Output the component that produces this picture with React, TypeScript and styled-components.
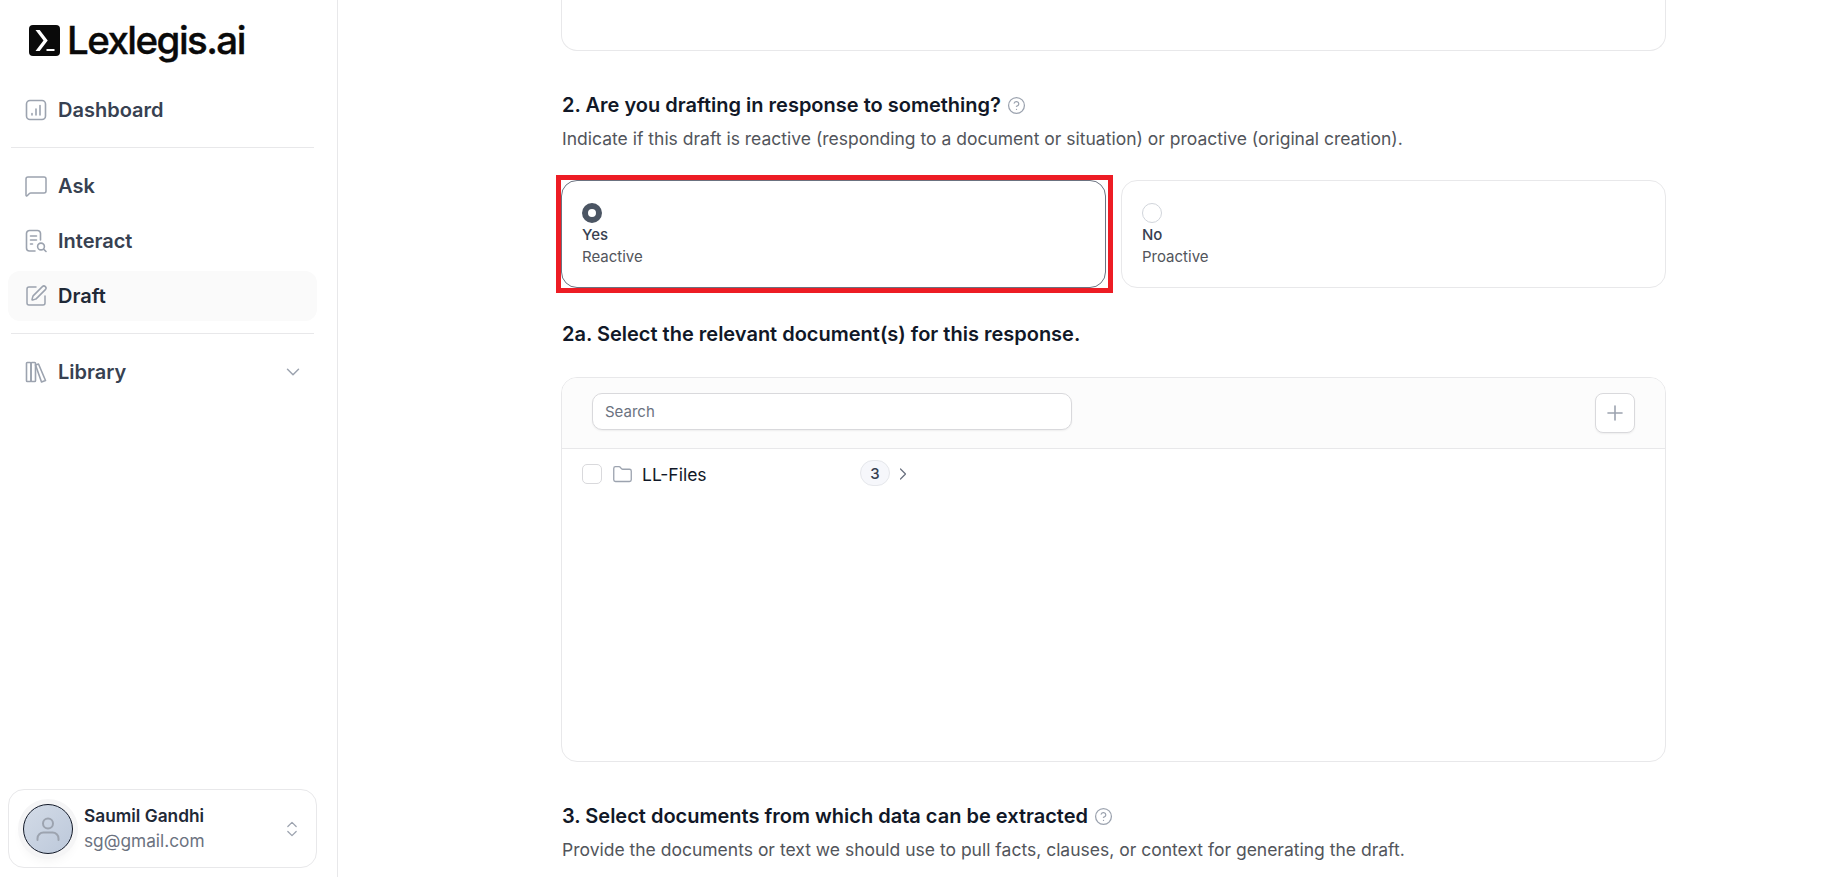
import React from "react";
import styled, { createGlobalStyle } from "styled-components";
import {
  ChevronDown,
  ChevronRight,
  ChevronsUpDown,
  CircleHelp,
  Folder,
  MessageSquare,
  Plus,
  SquarePen,
} from "lucide-react";

const GlobalStyle = createGlobalStyle`
  html, body {
    margin: 0;
    padding: 0;
    height: 100%;
    overflow: hidden;
    background: #ffffff;
    font-family: "Inter", "Noto Sans", sans-serif;
  }
  * {
    box-sizing: border-box;
  }
`;

const Page = styled.div`
  display: flex;
  width: 100%;
  height: 100vh;
  overflow: hidden;
`;

const Sidebar = styled.aside`
  width: 338px;
  flex-shrink: 0;
  height: 100%;
  display: flex;
  flex-direction: column;
  border-right: 1px solid #e8e8ea;
  padding: 0 20px 9px 8px;
`;

const LogoRow = styled.div`
  display: flex;
  align-items: center;
  gap: 7px;
  height: 40px;
  margin: 20px 0 1px 21px;
`;

const LogoText = styled.span`
  font-size: 38.5px;
  font-weight: 500;
  letter-spacing: -1.55px;
  line-height: 40px;
  color: #0a0a0a;
  -webkit-text-stroke: 0.4px #0a0a0a;
`;

const NavItem = styled.div<{ $active?: boolean }>`
  display: flex;
  align-items: center;
  gap: 10px;
  height: 50px;
  padding: 0 13px 0 16px;
  border-radius: 12px;
  background: ${(p) => (p.$active ? "#fafafa" : "transparent")};
  color: ${(p) => (p.$active ? "#1f2937" : "#374151")};
  font-size: 20px;
  font-weight: 600;
  svg {
    color: #9ca3af;
    flex-shrink: 0;
  }
`;

const IconSlot = styled.span`
  width: 24px;
  display: flex;
  justify-content: center;
  flex-shrink: 0;
`;

const NavLabel = styled.span`
  flex: 1;
`;

const NavDivider = styled.div`
  height: 1px;
  margin: 0 3px 0 3px;
  background: #e8e8ea;
`;

const FirstGroup = styled.div`
  margin-top: 24px;
  padding-bottom: 12px;
`;

const SecondGroup = styled.div`
  display: flex;
  flex-direction: column;
  gap: 5px;
  padding: 13px 0 12px;
`;

const LibraryGroup = styled.div`
  padding-top: 13px;
`;

const UserCard = styled.div`
  margin-top: auto;
  height: 79px;
  display: flex;
  align-items: center;
  padding: 0 14px;
  border: 1px solid #e8e8ea;
  border-radius: 16px;
  svg.updown {
    color: #9ca3af;
    margin-left: auto;
  }
`;

const Avatar = styled.div`
  width: 50px;
  height: 50px;
  border-radius: 50%;
  border: 1px solid #111827;
  background: linear-gradient(135deg, #d3dbe7, #bcc8da);
  display: flex;
  align-items: center;
  justify-content: center;
  color: #9ca3af;
  box-shadow: 0 0 0 5px #f5f5f6, 0 6px 12px rgba(0, 0, 0, 0.06);
`;

const UserInfo = styled.div`
  margin-left: 11px;
  display: flex;
  flex-direction: column;
  gap: 3px;
`;

const UserName = styled.span`
  font-size: 17.3px;
  font-weight: 600;
  line-height: 22px;
  color: #1f2937;
`;

const UserEmail = styled.span`
  font-size: 17.3px;
  line-height: 22px;
  color: #6b7280;
`;

const Main = styled.main`
  flex: 1;
  height: 100%;
  overflow: hidden;
  padding-left: 223px;
`;

const Content = styled.div`
  width: 1105px;
`;

const TopCard = styled.div`
  height: 51px;
  border: 1px solid #e8e8ea;
  border-top: none;
  border-radius: 0 0 16px 16px;
`;

const Heading = styled.h2<{ $top: number }>`
  display: flex;
  align-items: center;
  gap: 6px;
  margin: ${(p) => p.$top}px 0 0 1px;
  font-size: 20px;
  font-weight: 600;
  line-height: 28px;
  color: #111827;
  svg {
    color: #9ca3af;
  }
`;

const SubText = styled.p`
  margin: 8px 0 0 1px;
  font-size: 17.5px;
  line-height: 24px;
  color: #52555b;
`;

const OptionRow = styled.div`
  display: flex;
  gap: 15px;
  margin-top: 29px;
`;

const OptionCard = styled.div<{ $selected?: boolean }>`
  position: relative;
  flex: 1;
  height: 108px;
  padding: 22px 19px 0 20px;
  border-radius: 16px;
  border: 1px solid ${(p) => (p.$selected ? "#6b7280" : "#e8e8ea")};
  ${(p) =>
    p.$selected &&
    `&::after {
      content: "";
      position: absolute;
      inset: -6px -8px -6px -6px;
      border: 5px solid #ed1c24;
    }`}
`;

const Radio = styled.div<{ $checked?: boolean }>`
  width: 20px;
  height: 20px;
  border-radius: 50%;
  border: ${(p) => (p.$checked ? "6px solid #4b5563" : "1px solid #d1d5db")};
  background: #ffffff;
`;

const OptionTitle = styled.div`
  margin-top: 1px;
  font-size: 15px;
  font-weight: 500;
  line-height: 22px;
  color: #374151;
`;

const OptionDesc = styled.div`
  font-size: 15px;
  line-height: 21px;
  color: #52555b;
`;

const Browser = styled.div`
  height: 385px;
  margin-top: 29px;
  border: 1px solid #e8e8ea;
  border-radius: 16px;
  overflow: hidden;
`;

const BrowserHeader = styled.div`
  height: 71px;
  display: flex;
  align-items: flex-start;
  justify-content: space-between;
  padding: 15px 30px 0 30px;
  background: #fcfcfc;
  border-bottom: 1px solid #e8e8ea;
`;

const SearchBox = styled.div`
  width: 480px;
  height: 37px;
  display: flex;
  align-items: center;
  padding: 0 12px 1px;
  border: 1px solid #d9d9dc;
  border-radius: 10px;
  background: #ffffff;
  font-size: 15px;
  color: #6b7280;
  box-shadow: 0 1px 2px rgba(0, 0, 0, 0.06);
`;

const AddButton = styled.div`
  width: 40px;
  height: 40px;
  display: flex;
  align-items: center;
  justify-content: center;
  border: 1px solid #d9d9dc;
  border-radius: 8px;
  background: #ffffff;
  color: #9ca3af;
  box-shadow: 0 1px 2px rgba(0, 0, 0, 0.06);
`;

const FileRow = styled.div`
  display: flex;
  align-items: center;
  height: 42px;
  margin-top: 4px;
  padding-left: 20px;
  svg.folder {
    color: #9ca3af;
    margin-left: 10px;
  }
  svg.next {
    color: #6b7280;
    margin-left: 3px;
  }
`;

const Checkbox = styled.div`
  width: 20px;
  height: 20px;
  border: 1px solid #d9d9dc;
  border-radius: 5px;
`;

const FileName = styled.span`
  width: 218px;
  margin-left: 9px;
  font-size: 17.5px;
  color: #111827;
`;

const CountBadge = styled.span`
  width: 30px;
  height: 26px;
  display: flex;
  align-items: center;
  justify-content: center;
  margin-top: -2px;
  border: 1px solid #e5e7eb;
  border-radius: 13px;
  background: #f6f7fb;
  font-size: 15px;
  font-weight: 500;
  color: #374151;
`;

const LogoMark = () => (
  <svg width="31" height="31" viewBox="0 0 31 31">
    <rect width="31" height="31" rx="4" fill="#0a0a0a" />
    <path d="M6.5 5h4.2l8 10.5-8 10.5H6.5l8-10.5z" fill="#fff" />
    <rect x="17.5" y="24" width="8" height="2" fill="#fff" />
  </svg>
);

const DashboardIcon = () => (
  <svg width="22" height="22" viewBox="0 0 22 22" fill="none" stroke="currentColor" strokeWidth="1.6" strokeLinecap="round">
    <rect x="1.5" y="1.5" width="19" height="19" rx="3.5" />
    <path d="M7 16v-1.5M11 16V10M15 16V6.5" />
  </svg>
);

const InteractIcon = () => (
  <svg width="22" height="24" viewBox="0 0 22 24" fill="none" stroke="currentColor" strokeWidth="1.6" strokeLinecap="round">
    <path d="M10 22H4.5a3 3 0 0 1-3-3V4.5a3 3 0 0 1 3-3h8a3 3 0 0 1 3 3V11" />
    <path d="M5.5 7h6M5.5 11h6M5.5 15h2" />
    <circle cx="16" cy="17.5" r="3.4" />
    <path d="M18.6 20.2 21 22.5" />
  </svg>
);

const LibraryIcon = () => (
  <svg width="22" height="22" viewBox="0 0 22 22" fill="none" stroke="currentColor" strokeWidth="1.6" strokeLinejoin="round">
    <rect x="1.5" y="1.5" width="4.5" height="19" rx="0.8" />
    <rect x="6" y="1.5" width="4.5" height="19" rx="0.8" />
    <path d="M10.5 4 13.5 3l7 16.5-4 1.5z" />
  </svg>
);

const UserGlyph = () => (
  <svg width="26" height="26" viewBox="0 0 26 26" fill="none" stroke="currentColor" strokeWidth="2" strokeLinecap="round">
    <circle cx="13" cy="7.5" r="5" />
    <path d="M2.5 24v-1.5a6 6 0 0 1 6-6h9a6 6 0 0 1 6 6V24" />
  </svg>
);

export default function App() {
  return (
    <Page>
      <GlobalStyle />
      <Sidebar>
        <LogoRow>
          <LogoMark />
          <LogoText>Lexlegis.ai</LogoText>
        </LogoRow>
        <FirstGroup>
          <NavItem>
            <IconSlot><DashboardIcon /></IconSlot>
            <NavLabel>Dashboard</NavLabel>
          </NavItem>
        </FirstGroup>
        <NavDivider />
        <SecondGroup>
          <NavItem>
            <IconSlot><MessageSquare size={24} strokeWidth={1.5} /></IconSlot>
            <NavLabel>Ask</NavLabel>
          </NavItem>
          <NavItem>
            <IconSlot><InteractIcon /></IconSlot>
            <NavLabel>Interact</NavLabel>
          </NavItem>
          <NavItem $active>
            <IconSlot><SquarePen size={24} strokeWidth={1.5} /></IconSlot>
            <NavLabel>Draft</NavLabel>
          </NavItem>
        </SecondGroup>
        <NavDivider />
        <LibraryGroup>
          <NavItem>
            <IconSlot><LibraryIcon /></IconSlot>
            <NavLabel>Library</NavLabel>
            <ChevronDown size={22} strokeWidth={1.6} />
          </NavItem>
        </LibraryGroup>
        <UserCard>
          <Avatar>
            <UserGlyph />
          </Avatar>
          <UserInfo>
            <UserName>Saumil Gandhi</UserName>
            <UserEmail>sg@gmail.com</UserEmail>
          </UserInfo>
          <ChevronsUpDown className="updown" size={20} strokeWidth={1.5} />
        </UserCard>
      </Sidebar>
      <Main>
        <Content>
          <TopCard />
          <Heading $top={40}>
            2. Are you drafting in response to something?
            <CircleHelp size={19} strokeWidth={1.6} />
          </Heading>
          <SubText>Indicate if this draft is reactive (responding to a document or situation) or proactive (original creation).</SubText>
          <OptionRow>
            <OptionCard $selected>
              <Radio $checked />
              <OptionTitle>Yes</OptionTitle>
              <OptionDesc>Reactive</OptionDesc>
            </OptionCard>
            <OptionCard>
              <Radio />
              <OptionTitle>No</OptionTitle>
              <OptionDesc>Proactive</OptionDesc>
            </OptionCard>
          </OptionRow>
          <Heading $top={32}>2a. Select the relevant document(s) for this response.</Heading>
          <Browser>
            <BrowserHeader>
              <SearchBox>Search</SearchBox>
              <AddButton>
                <Plus size={24} strokeWidth={1.6} />
              </AddButton>
            </BrowserHeader>
            <FileRow>
              <Checkbox />
              <Folder className="folder" size={21} strokeWidth={1.5} />
              <FileName>LL-Files</FileName>
              <CountBadge>3</CountBadge>
              <ChevronRight className="next" size={20} strokeWidth={1.5} />
            </FileRow>
          </Browser>
          <Heading $top={40}>
            3. Select documents from which data can be extracted
            <CircleHelp size={19} strokeWidth={1.6} />
          </Heading>
          <SubText>Provide the documents or text we should use to pull facts, clauses, or context for generating the draft.</SubText>
        </Content>
      </Main>
    </Page>
  );
}
